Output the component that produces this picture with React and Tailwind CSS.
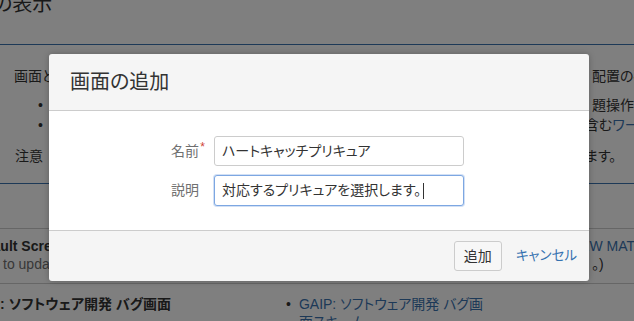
import React from 'react';

const font = { fontFamily: '"Liberation Sans", "Noto Sans CJK JP", sans-serif' };

function PageRow({ left, right, rightPad = 'pl-[7px]', className = '' }) {
  return (
    <div className={`flex items-center whitespace-nowrap ${className}`}>
      <div className="flex-1 overflow-hidden">{left}</div>
      <div className={`w-[49px] overflow-hidden ${rightPad}`}>{right}</div>
    </div>
  );
}

function Background() {
  return (
    <div className="w-[634px] h-[321px] overflow-hidden bg-white text-[14px] text-[#333] [font-feature-settings:'palt']">
      <div className="-mt-[8px] h-[53px] border-b border-[#3b73af]">
        <h2 className="-ml-[7px] text-[20px] leading-[24px] font-normal">の表示</h2>
      </div>

      <PageRow className="mt-[21px] h-[20px]" left={<span className="pl-[14px]">画面とワークフローの関連付けを確認します。</span>} right="配置の確認" />
      <PageRow className="mt-[9px] h-[20px]" left={<span className="pl-[38px]">•<span className="pl-[14px]">課題の作成と編集</span></span>} right="題操作画面" />
      <PageRow className="h-[20px]" left={<span className="pl-[38px]">•<span className="pl-[14px]">ワークフロー</span></span>} rightPad="pl-0" right={<span>含む<span className="text-[#3b73af]">ワークフロー</span></span>} />
      <PageRow className="mt-[11px] h-[20px]" left={<span className="pl-[15px]">注意<span className="pl-[10px]">画面は複数のスキームで使用できます。</span></span>} rightPad="pl-0" right="ます。" />

      <div className="mt-[17px] border-b border-[#3b73af]" />

      <div className="mt-[44px] border-b border-[#ccc]" />
      <PageRow className="mt-[8px] h-[18px]" left={<span className="-ml-[30px] font-bold">Default Screen</span>} rightPad="pl-0" right={<span className="text-[#3b73af] -ml-[15px]">NEW MATTER</span>} />
      <PageRow className="h-[18px]" left={<span className="pl-[3px] text-[#707070]">to update the default screen</span>} right="。)" />
      <div className="mt-[10px] border-b border-[#ccc]" />

      <div className="flex mt-[10px] h-[18px] whitespace-nowrap">
        <div className="w-[286px] font-bold">: ソフトウェア開発 バグ画面</div>
        <div className="flex-1 overflow-hidden">
          <span>•</span>
          <span className="pl-[8px] text-[#3b73af]">GAIP: ソフトウェア開発 バグ画</span>
        </div>
      </div>
      <div className="pl-[299px] h-[18px] text-[#3b73af]">面スキーム</div>
    </div>
  );
}

export default function App() {
  return (
    <div className="relative w-[634px] h-[321px] overflow-hidden" style={font}>
      <Background />
      <div className="absolute inset-0 bg-black/50" />

      <div className="absolute left-[49px] top-[54px] w-[540px] rounded-[3px] overflow-hidden shadow-[0_0_6px_rgba(0,0,0,0.25)] [font-feature-settings:'palt']">
        <div className="h-[57px] bg-[#f5f5f5] border-b border-[#ccc] flex items-center pl-[21px]">
          <h2 className="text-[20px] font-normal text-[#333]">画面の追加</h2>
        </div>

        <div className="h-[119px] bg-white pt-[25px] flex flex-col gap-[9px]">
          <div className="flex items-center">
            <label className="relative w-[150px] text-right text-[14px] text-[#707070]">
              名前
              <span className="absolute -right-[6px] -top-[3px] text-[12px] text-[#d04437]">*</span>
            </label>
            <div className="ml-[15px] w-[250px] h-[30px] border border-[#ccc] rounded-[3px] bg-white flex items-center pl-[7px] text-[14px] text-[#333]">
              ハートキャッチプリキュア
            </div>
          </div>
          <div className="flex items-center">
            <label className="w-[150px] text-right text-[14px] text-[#707070]">説明</label>
            <div className="ml-[15px] w-[250px] h-[31px] border border-[#7da7e2] rounded-[3px] bg-white flex items-center pl-[7px] text-[14px] text-[#333] shadow-[0_0_0_1px_rgba(125,167,226,0.35)]">
              対応するプリキュアを選択します。
              <span className="ml-[2px] w-px h-[16px] bg-[#333]" />
            </div>
          </div>
        </div>

        <div className="h-[51px] bg-[#f5f5f5] border-t border-[#ccc] flex items-center justify-end pr-[12px] gap-[14px]">
          <button className="h-[30px] px-[9px] border border-[#ccc] rounded-[3px] bg-[#f7f7f7] text-[14px] text-[#333]">
            追加
          </button>
          <a className="text-[13.5px] text-[#3572b0]">キャンセル</a>
        </div>
      </div>
    </div>
  );
}
